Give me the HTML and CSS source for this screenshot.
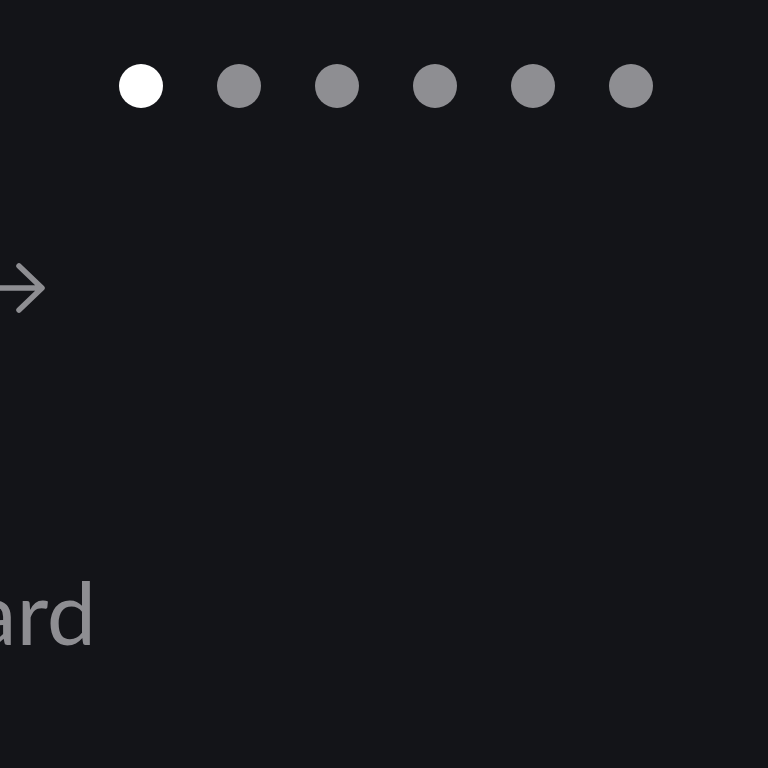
FILE: index.html
```html
<!DOCTYPE html>
<html lang="en">
<head>
<meta charset="utf-8">
<title>Onboarding</title>
<link rel="stylesheet" href="styles.css">
</head>
<body>
<main class="screen">
  <div class="dots">
    <span class="dot active"></span>
    <span class="dot"></span>
    <span class="dot"></span>
    <span class="dot"></span>
    <span class="dot"></span>
    <span class="dot"></span>
  </div>
  <div class="next">
    <svg class="arrow" width="50" height="50" viewBox="0 0 50 50" aria-hidden="true">
      <path d="M-6 25 H41 M19 3 L42 25 L19 47" fill="none" stroke="#8e8e92" stroke-width="5.5" stroke-linecap="round" stroke-linejoin="round"/>
    </svg>
  </div>
  <div class="title-wrap">
    <span class="title">Dashboard</span>
  </div>
</main>
</body>
</html>
```
FILE: styles.css
```css
html, body {
  margin: 0;
  padding: 0;
  background: #131418;
  overflow: hidden;
}
.screen {
  width: 768px;
  height: 768px;
  display: flex;
  flex-direction: column;
  padding-top: 64px;
  box-sizing: border-box;
  font-family: Lato, "Noto Sans", sans-serif;
}
.dots {
  display: flex;
  gap: 54px;
  margin-left: 119px;
}
.dot {
  width: 44px;
  height: 44px;
  border-radius: 50%;
  background: #8e8e92;
}
.dot.active {
  background: #ffffff;
}
.next {
  margin-top: 155px;
  height: 50px;
  display: flex;
}
.arrow {
  display: block;
  overflow: visible;
}
.title-wrap {
  margin-top: 246px;
  width: 96px;
  display: flex;
  justify-content: flex-end;
}
.title {
  white-space: nowrap;
  font-size: 88px;
  font-weight: 400;
  line-height: 1.2;
  color: #8e8e92;
}
```
